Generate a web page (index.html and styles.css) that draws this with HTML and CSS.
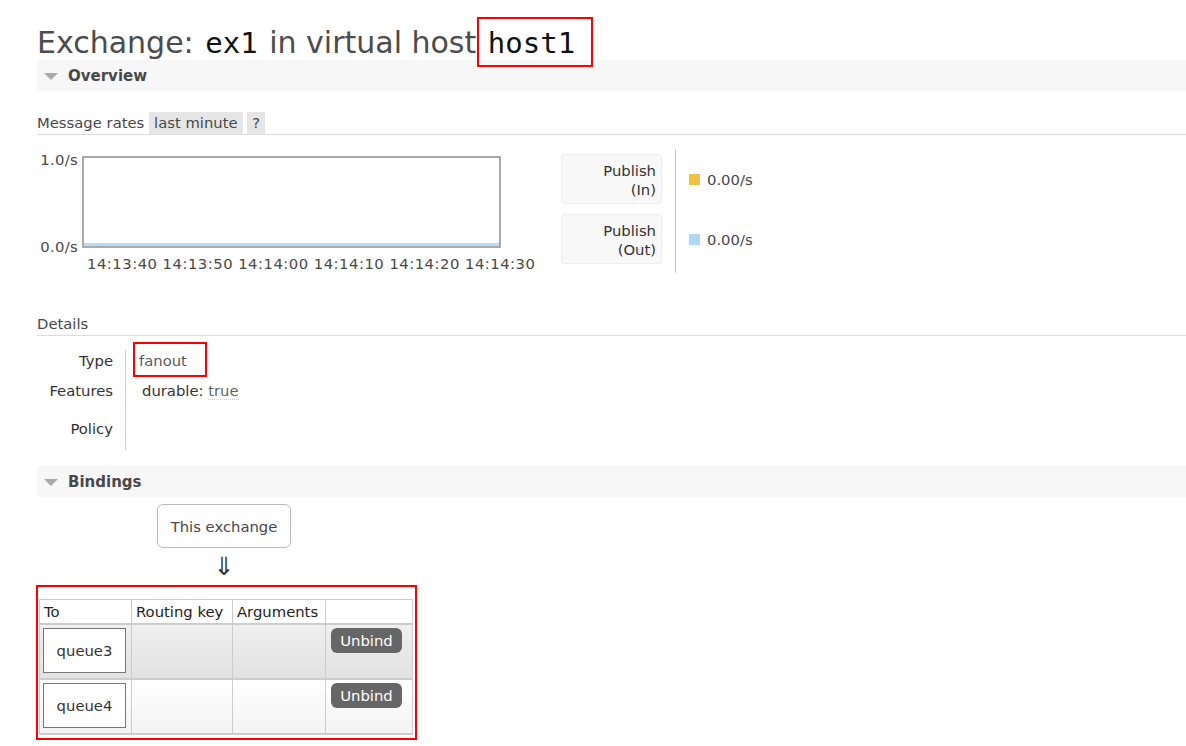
FILE: index.html
```html
<!DOCTYPE html>
<html>
<head>
<meta charset="utf-8">
<title>Exchange: ex1</title>
<link rel="stylesheet" href="styles.css">
</head>
<body>
<div class="main">
  <h1 class="title">Exchange: <b class="mono">ex1</b> in virtual host <span class="mark mark-host"><b class="mono">host1</b></span></h1>

  <div class="section">
    <h2 class="section-head"><span class="tri"></span>Overview</h2>
    <div class="section-body">
      <h3 class="sub sub-rates">Message rates <span class="pill">last minute</span> <span class="pill">?</span></h3>

      <div class="rates">
        <div class="chart">
          <div class="chart-main">
            <div class="yaxis"><span>1.0/s</span><span>0.0/s</span></div>
            <div class="plot"><div class="plot-line"></div></div>
          </div>
          <div class="xaxis">
            <span>14:13:40</span><span>14:13:50</span><span>14:14:00</span><span>14:14:10</span><span>14:14:20</span><span>14:14:30</span>
          </div>
        </div>

        <div class="legend">
          <div class="legend-labels">
            <div class="legend-box">Publish<br>(In)</div>
            <div class="legend-box">Publish<br>(Out)</div>
          </div>
          <div class="legend-values">
            <div class="legend-value"><span class="swatch swatch-in"></span>0.00/s</div>
            <div class="legend-value"><span class="swatch swatch-out"></span>0.00/s</div>
          </div>
        </div>
      </div>

      <h3 class="sub sub-details">Details</h3>
      <div class="facts">
        <div class="fact-label fact-r1">Type</div>
        <div class="fact-value fact-r1"><span class="mark mark-type">fanout</span></div>
        <div class="fact-label fact-r2">Features</div>
        <div class="fact-value fact-r2 fact-features">durable: <abbr class="val" title="durable">true</abbr></div>
        <div class="fact-label fact-r3">Policy</div>
        <div class="fact-value fact-r3"></div>
      </div>
    </div>
  </div>

  <div class="section">
    <h2 class="section-head"><span class="tri"></span>Bindings</h2>
    <div class="section-body">
      <div class="bind-source">This exchange</div>
      <div class="bind-arrow">⇓</div>
      <div class="bind-frame">
        <table class="bindings">
          <colgroup>
            <col class="c-to"><col class="c-key"><col class="c-args"><col class="c-act">
          </colgroup>
          <thead>
            <tr><th>To</th><th>Routing key</th><th>Arguments</th><th></th></tr>
          </thead>
          <tbody>
            <tr class="row-alt1">
              <td><div class="queue-box">queue3</div></td>
              <td></td><td></td>
              <td><button class="btn-unbind" type="button">Unbind</button></td>
            </tr>
            <tr class="row-alt2">
              <td><div class="queue-box">queue4</div></td>
              <td></td><td></td>
              <td><button class="btn-unbind" type="button">Unbind</button></td>
            </tr>
          </tbody>
        </table>
      </div>
    </div>
  </div>
</div>
</body>
</html>
```

FILE: styles.css
```css
html, body {
  margin: 0;
  padding: 0;
  background: #fff;
}

body {
  font-family: "DejaVu Sans", Verdana, sans-serif;
  font-size: 14.8px;
  color: #333;
  overflow: hidden;
}

.main {
  padding-left: 37px;
}

/* Title */
.title {
  margin: 25px 0 0;
  font-size: 30px;
  font-weight: normal;
  line-height: 35px;
  height: 35px;
  color: #4c4c4c;
  white-space: nowrap;
}

.mono {
  font-family: "DejaVu Sans Mono", "Liberation Mono", monospace;
  font-weight: normal;
  font-size: 29px;
  color: #111;
  padding: 0 2px;
}

.mark {
  position: relative;
  display: inline-block;
}

.mark::after {
  content: "";
  position: absolute;
  border: 2px solid #f00;
  pointer-events: none;
}

.mark-host::after {
  left: -9px;
  right: -16px;
  top: -8px;
  bottom: -6px;
}

.mark-type::after {
  left: -6px;
  right: -20px;
  top: -8px;
  bottom: -5px;
}

/* Sections */
.section-head {
  margin: 0;
  height: 31px;
  display: flex;
  align-items: center;
  background: #f7f7f7;
  font-size: 15px;
  font-weight: bold;
  color: #484848;
}

.tri {
  width: 0;
  height: 0;
  margin: 1px 10px 0 7px;
  border-left: 7px solid transparent;
  border-right: 7px solid transparent;
  border-top: 7px solid #aaa;
}

.sub {
  margin: 0;
  font-size: 14.8px;
  font-weight: normal;
  color: #484848;
  line-height: 22px;
  border-bottom: 1px solid #ddd;
}

.sub-rates {
  margin-top: 21px;
}

.pill {
  display: inline-block;
  background: #e6e6e6;
  padding: 0 5px;
  color: #484848;
}

/* Rates */
.rates {
  display: flex;
  margin-top: 15px;
}

.chart {
  width: 499px;
}

.chart-main {
  display: flex;
  height: 106px;
}

.yaxis {
  width: 41px;
  margin-right: 4px;
  display: flex;
  flex-direction: column;
  justify-content: space-between;
  align-items: flex-end;
  line-height: 18px;
  color: #484848;
  letter-spacing: 0.3px;
  padding-top: 1px;
}

.plot {
  width: 415px;
  height: 88px;
  margin-top: 6px;
  border: 2px solid #a9a9a9;
  position: relative;
  background: #fff;
}

.plot-line {
  position: absolute;
  left: 0;
  right: 0;
  bottom: 0;
  height: 3px;
  background: #b9dcf5;
}

.xaxis {
  display: flex;
  margin: -1px 0 0 50px;
  line-height: 18px;
  color: #484848;
  letter-spacing: 0.5px;
  white-space: nowrap;
}

.xaxis span {
  width: 75.6px;
  flex: none;
}

.legend {
  display: flex;
  margin-left: 25px;
  margin-top: -1px;
}

.legend-labels {
  display: flex;
  flex-direction: column;
  gap: 10px;
  padding: 5px 0 6px;
  margin-right: 13px;
}

.legend-box {
  width: 93px;
  height: 40px;
  padding: 6px 5px 2px 1px;
  text-align: right;
  line-height: 19px;
  background: #f8f8f8;
  border: 1px solid #eee;
  border-radius: 3px;
  color: #333;
}

.legend-values {
  border-left: 1px solid #ccc;
  padding: 5px 0 6px 13px;
  display: flex;
  flex-direction: column;
  gap: 10px;
}

.legend-value {
  height: 50px;
  display: flex;
  align-items: center;
  color: #484848;
}

.swatch {
  width: 11px;
  height: 11px;
  margin-right: 7px;
}

.swatch-in { background: #ecc23f; }
.swatch-out { background: #afd8f8; }

/* Details */
.sub-details {
  margin-top: 40px;
}

.facts {
  display: grid;
  grid-template-columns: 89px auto;
  grid-template-rows: 30px 38px 32px;
  margin-top: 14px;
  line-height: 22px;
}

.fact-label {
  text-align: right;
  padding-right: 12px;
  border-right: 1px solid #ccc;
  color: #333;
}

.fact-value {
  padding-left: 13px;
  color: #5a5a5a;
}

.fact-features {
  padding-left: 16px;
  color: #333;
}

.val {
  color: #666;
  text-decoration: none;
  border-bottom: 1px dotted #ccc;
}

/* Bindings */
.section + .section {
  margin-top: 16px;
}

.bind-source {
  margin: 7px 0 0 120px;
  width: 132px;
  height: 42px;
  border: 1px solid #bbb;
  border-radius: 6px;
  display: flex;
  align-items: center;
  justify-content: center;
  color: #484848;
}

.bind-arrow {
  margin-left: 120px;
  width: 134px;
  margin-top: 5px;
  text-align: center;
  font-size: 25px;
  line-height: 28px;
  color: #333;
}

.bind-frame {
  margin: 4px 0 0 -1px;
  width: 375px;
  padding: 12px 1px 3px 1px;
  border: 2px solid #f00;
}

.bindings {
  width: 373px;
  border-collapse: collapse;
  table-layout: fixed;
  border: 1px solid #ccc;
  border-bottom-width: 2px;
}

.c-to { width: 92px; }
.c-key { width: 101px; }
.c-args { width: 93px; }
.c-act { width: 87px; }

.bindings th {
  text-align: left;
  font-weight: normal;
  padding: 0 0 0 4px;
  height: 23px;
  line-height: 23px;
  color: #222;
  border-left: 1px solid #ccc;
  white-space: nowrap;
  background: #fff;
}

.bindings td {
  border-left: 1px solid #ccc;
  border-top: 2px solid #ccc;
  padding: 3px 4px 4px 3px;
  height: 46px;
  vertical-align: top;
}

.row-alt1 td {
  background: linear-gradient(#efefef, #e1e1e1);
}

.row-alt2 td {
  background: linear-gradient(#fff, #f3f3f3);
}

.queue-box {
  width: 81px;
  height: 43px;
  border: 1px solid #777;
  background: #fff;
  display: flex;
  align-items: center;
  justify-content: center;
  color: #333;
}

.btn-unbind {
  margin-left: 2px;
  width: 71px;
  height: 25px;
  padding: 0;
  border: none;
  border-radius: 6px;
  background: #666;
  color: #fff;
  font-family: "DejaVu Sans", Verdana, sans-serif;
  font-size: 14.8px;
  line-height: 25px;
  cursor: pointer;
}
```
